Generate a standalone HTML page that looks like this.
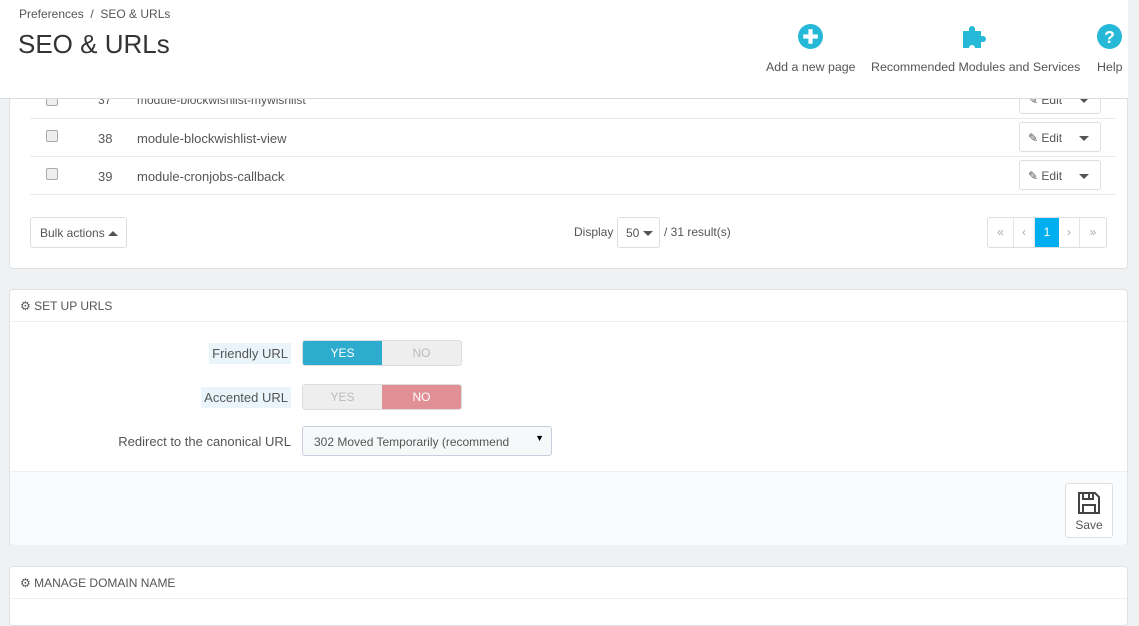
<!DOCTYPE html>
<html><head><meta charset="utf-8"><style>
*{box-sizing:border-box;margin:0;padding:0}
body{width:1139px;height:606px;overflow:hidden;background:#eff1f2;font-family:"Liberation Sans",sans-serif;font-size:12px;color:#555;position:relative}
.abs{position:absolute}
.panel{position:absolute;left:9px;width:1119px;background:#fff;border:1px solid #dfe3e6;border-radius:4px}
.row{position:absolute;left:20px;width:1086px;height:38px;border-bottom:1px solid #e8ebed}
.cb{position:absolute;left:16px;width:12px;height:12px;border:1px solid #aaa;border-radius:2px;background:#eee}
.edit{position:absolute;left:1009px;width:82px;height:30px;border:1px solid #dcdfe2;border-radius:3px;background:#fff;font-size:12px;color:#555;padding:8px 0 0 8px}
.caret{display:inline-block;border-left:5px solid transparent;border-right:5px solid transparent;border-top:5px solid #555;vertical-align:middle}
.ph{position:absolute;left:0;top:0;width:100%;height:32px;border-bottom:1px solid #eef0f2;font-family:"Liberation Sans Narrow","Liberation Sans",sans-serif;font-size:12px;color:#555;padding:9px 0 0 10px}
.lab{position:absolute;right:0;font-size:13px;color:#555;text-align:right}
.lab span{background:#eaf5fb;padding:3px 3px}
.sw{position:absolute;left:292px;width:160px;height:26px;border-radius:3px;display:flex;font-size:12px;overflow:hidden;border:1px solid #ddd}
.sw div{flex:1;text-align:center;line-height:24px}
</style></head><body>

<div class="panel" style="top:60px;height:209px">
  <div class="row" style="top:20px"><div class="cb" style="top:13px"></div><div class="abs" style="left:68px;top:12px">37</div><div class="abs" style="left:107px;top:12px">module-blockwishlist-mywishlist</div></div>
  <div class="row" style="top:58px"><div class="cb" style="top:11px"></div><div class="abs" style="left:68px;top:12px;font-size:13px">38</div><div class="abs" style="left:107px;top:12px;font-size:13px">module-blockwishlist-view</div></div>
  <div class="row" style="top:96px"><div class="cb" style="top:11px"></div><div class="abs" style="left:68px;top:12px;font-size:13px">39</div><div class="abs" style="left:107px;top:12px;font-size:13px">module-cronjobs-callback</div></div>
  <div class="edit" style="top:23px">✎ Edit &nbsp;&nbsp;&nbsp;&nbsp;<span class="caret"></span></div>
  <div class="edit" style="top:61px">✎ Edit &nbsp;&nbsp;&nbsp;&nbsp;<span class="caret"></span></div>
  <div class="edit" style="top:99px">✎ Edit &nbsp;&nbsp;&nbsp;&nbsp;<span class="caret"></span></div>
  <div class="abs" style="left:20px;top:156px;width:97px;height:31px;border:1px solid #dcdfe2;border-radius:3px;padding:8px 0 0 9px;font-size:12px">Bulk actions <span class="caret" style="border-top:0;border-bottom:5px solid #555"></span></div>
  <div class="abs" style="left:564px;top:164px;font-size:12px">Display</div>
  <div class="abs" style="left:607px;top:156px;width:43px;height:31px;border:1px solid #dcdfe2;border-radius:3px;padding:8px 0 0 8px">50 <span class="caret"></span></div>
  <div class="abs" style="left:654px;top:164px">/ 31 result(s)</div>
  <div class="abs" style="left:977px;top:156px;width:120px;height:31px;border:1px solid #dcdfe2;border-radius:3px;display:flex;color:#aaa;overflow:hidden">
    <div style="width:26px;border-right:1px solid #e5e5e5;text-align:center;line-height:29px">«</div>
    <div style="width:21px;border-right:1px solid #e5e5e5;text-align:center;line-height:29px">‹</div>
    <div style="width:24px;background:#00aff0;color:#fff;text-align:center;line-height:29px">1</div>
    <div style="width:21px;border-right:1px solid #e5e5e5;text-align:center;line-height:29px">›</div>
    <div style="flex:1;text-align:center;line-height:29px">»</div>
  </div>
</div>

<div class="abs" style="left:0;top:0;width:1128px;height:99px;background:#fff;border-bottom:1px solid #d9dcdf"></div>
<div class="abs" style="left:19px;top:7px;font-size:12px;color:#555">Preferences &nbsp;/&nbsp; SEO &amp; URLs</div>
<div class="abs" style="left:18px;top:29px;font-size:26px;color:#333">SEO &amp; URLs</div>
<svg class="abs" style="left:798px;top:24px" width="25" height="25" viewBox="0 0 24 24"><circle cx="12" cy="12" r="12" fill="#25b9d7"/><rect x="10" y="5" width="4" height="14" fill="#fff"/><rect x="5" y="10" width="14" height="4" fill="#fff"/></svg>
<svg class="abs" style="left:961px;top:23px" width="28" height="26" viewBox="0 0 28 26"><path d="M2 8h6v-2a3 3 0 1 1 6 0v2h6v5h2a3 3 0 1 1 0 6h-2v6h-6a3 3 0 0 0-6 0H2z" fill="#25b9d7"/></svg>
<svg class="abs" style="left:1097px;top:24px" width="25" height="25" viewBox="0 0 24 24"><circle cx="12" cy="12" r="12" fill="#25b9d7"/><text x="12" y="18" text-anchor="middle" font-family="Liberation Sans" font-weight="bold" font-size="17" fill="#fff">?</text></svg>
<div class="abs" style="left:766px;top:60px;font-size:12.4px">Add a new page</div>
<div class="abs" style="left:871px;top:60px;font-size:12.4px">Recommended Modules and Services</div>
<div class="abs" style="left:1097px;top:60px;font-size:12.4px">Help</div>

<div class="panel" style="top:289px;height:256px">
  <div class="ph">⚙ SET UP URLS</div>
  <div class="abs" style="left:0;width:281px;top:56px"><div class="lab"><span>Friendly URL</span></div></div>
  <div class="sw" style="top:50px"><div style="background:#2eacce;color:#fff">YES</div><div style="background:#eee;color:#bbb">NO</div></div>
  <div class="abs" style="left:0;width:281px;top:100px"><div class="lab"><span>Accented URL</span></div></div>
  <div class="sw" style="top:94px"><div style="background:#eee;color:#bbb">YES</div><div style="background:#e08f95;color:#fff">NO</div></div>
  <div class="abs" style="left:0;width:281px;top:144px"><div class="lab">Redirect to the canonical URL</div></div>
  <div class="abs" style="left:292px;top:136px;width:250px;height:30px;border:1px solid #ccd;border-radius:3px;background:#f6f9fa;padding:8px 0 0 11px;font-size:12px;color:#555">302 Moved Temporarily (recommend<span style="position:absolute;right:7px;top:6px;font-size:9px;color:#000">▼</span></div>
  <div class="abs" style="left:0;top:181px;width:100%;height:74px;background:#fafbfc;border-top:1px solid #eef0f2;border-radius:0 0 4px 4px"></div>
  <div class="abs" style="left:1055px;top:193px;width:48px;height:55px;border:1px solid #dcdfe2;border-radius:3px;background:#fff;text-align:center;font-size:12px">
    <svg style="margin-top:7px" width="24" height="24" viewBox="0 0 24 24"><path d="M2 2h16l4 4v16H2z M6 2v6h10V2 M12 3v4 M6 14h12v8H6z" fill="none" stroke="#444" stroke-width="2"/></svg>
    <div>Save</div>
  </div>
</div>

<div class="panel" style="top:566px;height:60px">
  <div class="ph">⚙ MANAGE DOMAIN NAME</div>
</div>
</body></html>
